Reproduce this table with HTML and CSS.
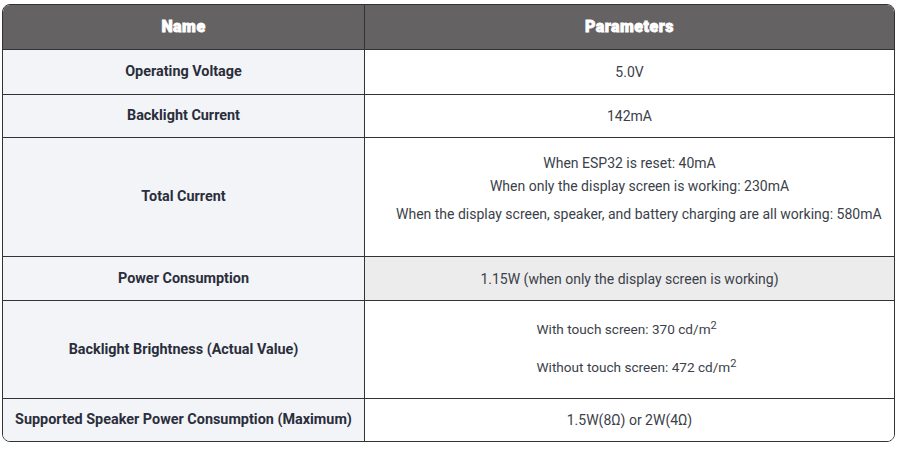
FILE: index.html
```html
<!DOCTYPE html>
<html lang="en">
<head>
<meta charset="utf-8">
<title>Parameters</title>
<link rel="stylesheet" href="styles.css">
</head>
<body>
<div class="wrap">
  <div class="spec">
    <div class="cell head">Name</div>
    <div class="cell head">Parameters</div>

    <div class="cell name">Operating Voltage</div>
    <div class="cell val">5.0V</div>

    <div class="cell name">Backlight Current</div>
    <div class="cell val">142mA</div>

    <div class="cell name">Total Current</div>
    <div class="cell val multi">
      <div class="lines lines-current">
        <p class="l1">When ESP32 is reset: 40mA</p>
        <p class="l2">When only the display screen is working: 230mA</p>
        <p class="l3">When the display screen, speaker, and battery charging are all working: 580mA</p>
      </div>
    </div>

    <div class="cell name">Power Consumption</div>
    <div class="cell val hl">1.15W (when only the display screen is working)</div>

    <div class="cell name">Backlight Brightness (Actual Value)</div>
    <div class="cell val multi">
      <div class="lines lines-bright">
        <p>With touch screen: 370 cd/m<sup>2</sup></p>
        <p>Without touch screen: 472 cd/m<sup>2</sup></p>
      </div>
    </div>

    <div class="cell name last">Supported Speaker Power Consumption (Maximum)</div>
    <div class="cell val last">1.5W(8Ω) or 2W(4Ω)</div>
  </div>
</div>
</body>
</html>
```

FILE: styles.css
```css
html, body {
  margin: 0;
  padding: 0;
  background: #ffffff;
}
body {
  font-family: Roboto, "Liberation Sans", Arial, sans-serif;
  font-size: 14px;
  color: #3b3f4a;
}
.wrap {
  padding: 4px 0 0 2px;
}
.spec {
  width: 891px;
  border: 1px solid #333333;
  border-radius: 8px;
  overflow: hidden;
  display: grid;
  grid-template-columns: 362px 1fr;
  grid-template-rows: 45px 45px 43px 119px 44px 98px 42px;
}
.cell {
  display: flex;
  align-items: center;
  justify-content: center;
  text-align: center;
  border-bottom: 1px solid #333333;
  line-height: 20px;
  min-width: 0;
}
.cell:nth-child(odd) {
  border-right: 1px solid #333333;
}
.cell.last {
  border-bottom: none;
}
.head {
  background: #646262;
  color: #ffffff;
  font-weight: 900;
  font-size: 16px;
  letter-spacing: 0.5px;
  -webkit-text-stroke: 0.8px #ffffff;
}
.name {
  background: #f3f4f8;
  color: #2a2e3b;
  font-weight: 700;
  font-size: 14.4px;
}
.val {
  background: #ffffff;
}
.val.hl {
  background: #ececec;
}
.multi {
  display: flex;
}
.lines p {
  margin: 0;
  line-height: 23px;
}
.lines-current {
  width: 100%;
  margin-bottom: 17px;
}
.lines-current .l1 {
  text-align: center;
}
.lines-current .l2 {
  text-align: center;
  padding-left: 20px;
}
.lines-current .l3 {
  margin-top: 5px;
  text-align: left;
  white-space: nowrap;
  padding-left: 31px;
}
.lines-bright {
  text-align: left;
  font-size: 13.6px;
  margin-bottom: 3px;
  padding-left: 14px;
}
.lines-bright p + p {
  margin-top: 15px;
}
sup {
  font-size: 11px;
  line-height: 0;
  vertical-align: 5px;
}
```
